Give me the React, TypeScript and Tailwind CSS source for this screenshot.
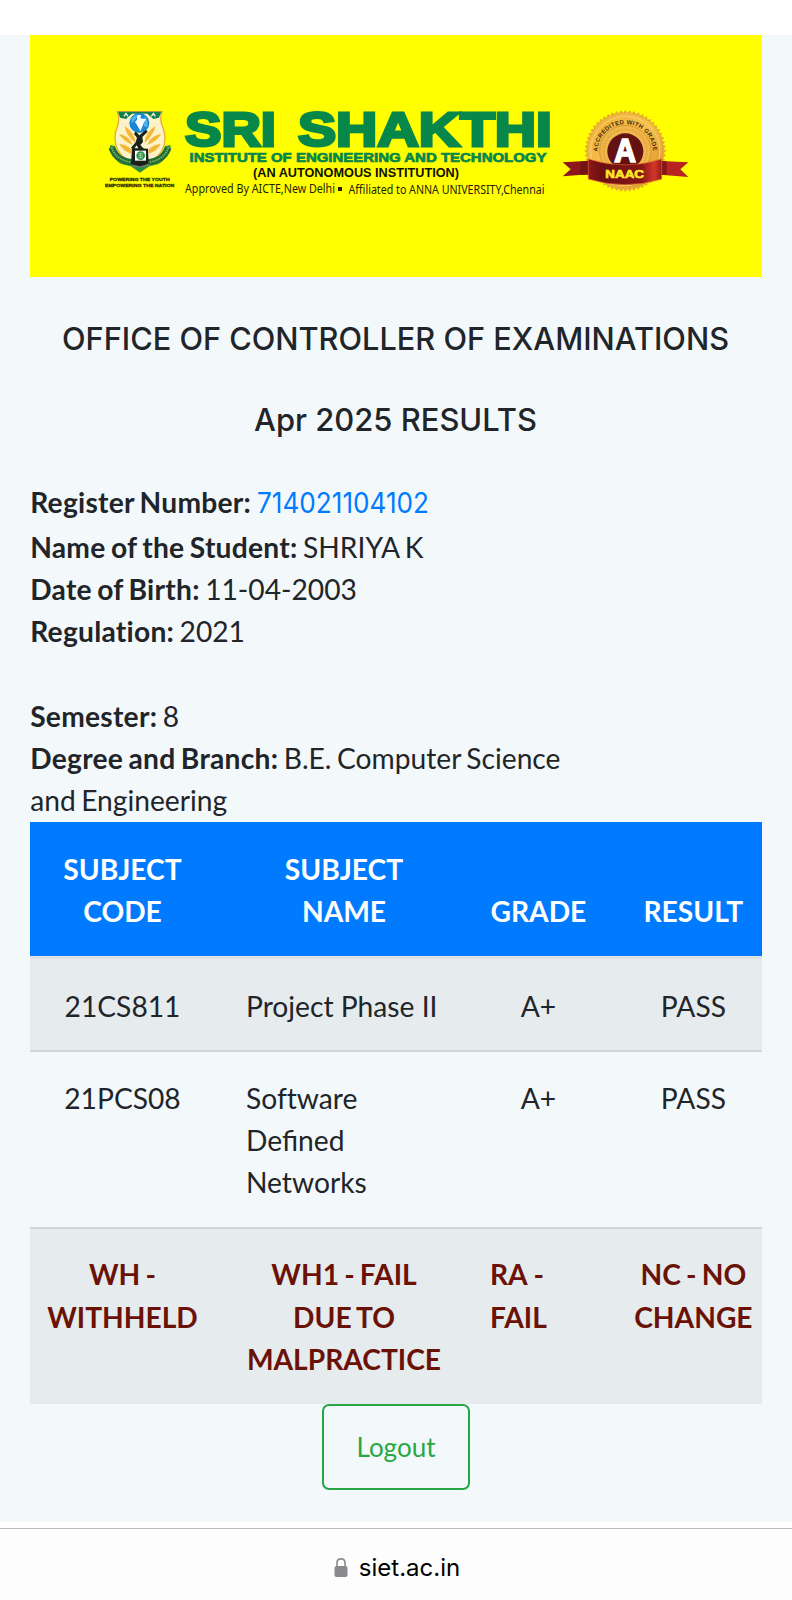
import React from "react";

const sunburst = Array.from({ length: 112 }, (_, i) => {
  const r = i % 2 ? 115 : 123;
  const a = (i / 112) * Math.PI * 2;
  return `${(226 + r * Math.cos(a)).toFixed(1)},${(168 + r * Math.sin(a)).toFixed(1)}`;
}).join(" ");

function Emblem() {
  return (
    <g transform="translate(90 95) scale(0.33333)">
      <path d="M61 150 L75 153 Q88 196 150 206 Q212 196 225 153 L241 150 L243 166 L234 171 Q229 194 204 208 L178 214 L150 233 L122 214 L94 207 Q70 194 67 172 L57 165 Z" fill="#3f9440" />
      <path d="M82 50 H216 Q207 72 219 98 Q229 124 222 151 Q211 192 150 216 Q90 192 78 151 Q71 122 81 98 Q91 72 82 50 Z" fill="#fdf3c8" stroke="#e9a73c" strokeWidth="4" />
      <path d="M84 50 H214 L207 68 L190 72 L172 56 H126 L108 72 L90 68 Z" fill="#16804a" />
      <path d="M102 64 l6 -9 l6 9 M184 64 l6 -9 l6 9" stroke="#eaf5dd" strokeWidth="4" fill="none" />
      <g fill="#f3b83a">
        <path d="M128 149 Q99 139 87 116 Q117 122 128 149 Z" />
        <path d="M138 145 Q107 121 104 93 Q133 111 138 145 Z" />
        <path d="M172 149 Q202 139 214 116 Q182 122 172 149 Z" />
        <path d="M164 144 Q190 121 197 93 Q165 111 164 144 Z" />
        <path d="M88 147 Q108 148 125 164 L123 176 Q98 168 88 147 Z" />
        <path d="M212 147 Q192 148 175 164 L177 176 Q202 168 212 147 Z" />
      </g>
      <path d="M65 158 Q78 198 134 203 M235 158 Q222 198 166 203" fill="none" stroke="#226e35" strokeWidth="19" />
      <path d="M65 158 Q78 198 134 203 M235 158 Q222 198 166 203" fill="none" stroke="#8db878" strokeWidth="5" strokeDasharray="4 3" />
      <path d="M126 209 L150 232 L176 209 Z" fill="#249344" />
      <circle cx="148" cy="84" r="30" fill="#1687d4" />
      <path d="M123 72 Q134 57 144 61 Q135 78 126 84 Z M164 64 Q175 75 172 96 Q158 98 163 82 Z" fill="#53b4e9" />
      <path d="M142 60 L153 60 L151 70 L169 73 L162 82 L158 93 L151 109 L143 93 L135 81 L141 74 Z" fill="#f8fbff" />
      <path d="M137 109 L148 121 L168 104 L173 110 L157 126 L159 141 L151 150 L162 162 H146 L140 151 L130 164 L123 158 L137 142 L141 128 L132 117 Z" fill="#17241e" />
      <path d="M126 159 L174 161 L176 205 L151 218 L123 207 Z" fill="#192019" />
      <path d="M135 167 H168 V197 H135 Z" fill="#fff" />
      <circle cx="152" cy="182" r="13" fill="#2b944a" />
      <path d="M145 176 H159 M145 182 H159 M145 188 H159 M152 174 V191" stroke="#b7dcba" strokeWidth="2" />
      <path d="M125 211 L151 216 L178 208" stroke="#777f76" strokeWidth="4" fill="none" />
      <g fontFamily="Liberation Sans, sans-serif" fontWeight="700" fontSize="12.5" fill="#332f00" stroke="#332f00" strokeWidth="0.8">
        <text x="59" y="258" textLength="180" lengthAdjust="spacingAndGlyphs">POWERING THE YOUTH</text>
        <text x="45" y="277" textLength="208" lengthAdjust="spacingAndGlyphs">EMPOWERING THE NATION</text>
      </g>
    </g>
  );
}

function NaacBadge() {
  return (
    <g transform="translate(550 95) scale(0.33333)">
      <defs>
        <linearGradient id="gold" x1="0" y1="0" x2="1" y2="1">
          <stop offset="0" stopColor="#f0b03a" />
          <stop offset="0.5" stopColor="#f4c04c" />
          <stop offset="1" stopColor="#d98b22" />
        </linearGradient>
        <linearGradient id="band">
          <stop offset="0" stopColor="#8e1719" />
          <stop offset="0.18" stopColor="#6c1012" />
          <stop offset="0.72" stopColor="#861516" />
          <stop offset="0.9" stopColor="#d3372a" />
          <stop offset="1" stopColor="#971b19" />
        </linearGradient>
        <path id="arc" d="M143 170 A83 83 0 0 1 309 170" />
      </defs>
      <polygon points={sunburst} fill="#e5ac36" />
      <circle cx="226" cy="168" r="113" fill="url(#gold)" />
      <circle cx="226" cy="168" r="104" fill="none" stroke="#f8d26c" strokeWidth="3" />
      <circle cx="226" cy="168" r="77" fill="#efb64b" stroke="#c88222" strokeWidth="2" />
      <circle cx="226" cy="168" r="65" fill="none" stroke="#d99a35" strokeWidth="5" strokeDasharray="2 3" />
      <circle cx="226" cy="169" r="54" fill="#641111" />
      <text fontFamily="Liberation Sans, sans-serif" fontWeight="700" fontSize="18" fill="#4b2808">
        <textPath href="#arc" textLength="258">ACCREDITED WITH GRADE</textPath>
      </text>
      <path d="M38 202 L119 197 V238 L38 244 L62 223 Z" fill="#8e171b" />
      <path d="M332 198 L415 202 L391 223 L415 246 L332 239 Z" fill="#b7231f" />
      <path d="M91 200 L117 197 V240 L91 240 Z M332 198 L350 199 V240 L332 239 Z" fill="#651113" opacity=".65" />
      <path d="M115 192 Q226 228 335 192 V252 Q226 286 115 252 Z" fill="url(#band)" stroke="#e4602b" strokeWidth="2" />
      <g fontFamily="Liberation Sans, sans-serif" fontWeight="700">
        <text x="193" y="202" fontSize="97" fill="#fff" stroke="#fff" strokeWidth="5" textLength="65" lengthAdjust="spacingAndGlyphs">A</text>
        <text x="166" y="250" fontSize="35" fill="#ffe928" stroke="#ffe928" strokeWidth="2" textLength="116" lengthAdjust="spacingAndGlyphs">NAAC</text>
      </g>
    </g>
  );
}

function Banner() {
  return (
    <svg viewBox="30 35 732 242" className="block h-[242px] w-[732px] bg-[#ffff00] [word-spacing:0px]">
      <Emblem />
      <g fill="#07874a" stroke="#07874a" fontFamily="Liberation Sans, sans-serif" fontWeight="700">
        <text x="185" y="146" fontSize="48.5" textLength="91" lengthAdjust="spacingAndGlyphs" strokeWidth="3">SRI</text>
        <text x="298" y="146" fontSize="48.5" textLength="254" lengthAdjust="spacingAndGlyphs" strokeWidth="3">SHAKTHI</text>
        <text x="189.5" y="161.8" fontSize="13" textLength="357" lengthAdjust="spacingAndGlyphs" strokeWidth="0.7">INSTITUTE OF ENGINEERING AND TECHNOLOGY</text>
      </g>
      <text x="253" y="177" fontSize="13.5" fontFamily="Liberation Sans, sans-serif" fontWeight="700" fill="#111000" textLength="206" lengthAdjust="spacingAndGlyphs">(AN AUTONOMOUS INSTITUTION)</text>
      <g fill="#242200" fontFamily="Noto Sans, sans-serif" fontSize="12">
        <text x="185" y="193.3" textLength="150" lengthAdjust="spacingAndGlyphs">Approved By AICTE,New Delhi</text>
        <rect x="338" y="187" width="4" height="4" />
        <text x="348.5" y="194" textLength="196" lengthAdjust="spacingAndGlyphs">Affiliated to ANNA UNIVERSITY,Chennai</text>
      </g>
      <NaacBadge />
    </svg>
  );
}

function Heading({ children, width }: { children: string; width: number }) {
  return (
    <svg width={width} height="48" className="block overflow-visible" role="heading">
      <text x="-1" y="35" textLength={width + 1} fontFamily="Inter, sans-serif" fontWeight="500" fontSize="31.5" fill="#212529" lengthAdjust="spacingAndGlyphs">{children}</text>
    </svg>
  );
}

function Label({ children }: { children: string }) {
  return <b className="tracking-[0.25px] [word-spacing:-1.7px]">{children}</b>;
}

function Lines({ items }: { items: string[] }) {
  return <>{items.map((t) => <span key={t} className="block">{t}</span>)}</>;
}

const cols = "grid grid-cols-[185px_258px_130.8px_158.2px]";

export default function App() {
  return (
    <div className="flex h-[1600px] w-[792px] flex-col overflow-hidden bg-white pt-[35px] font-['Lato',sans-serif] text-[28.2px] leading-[42.3px] text-[#212529] [word-spacing:-1.7px]">
      <main className="h-[1487px] shrink-0 bg-[#f3f8fb] pl-[30px]">
        <Banner />
        <div className="flex h-[204.3px] w-[732px] flex-col items-center gap-[33px] pt-[38px] [word-spacing:0px]">
          <Heading width={666}>OFFICE OF CONTROLLER OF EXAMINATIONS</Heading>
          <Heading width={282}>Apr 2025 RESULTS</Heading>
        </div>
        <section className="whitespace-nowrap pl-[0.2px]">
          <div className="flex h-[44.4px] gap-[6px]">
            <Label>Register Number:</Label>
            <svg width="172" height="42" className="overflow-visible">
              <text x="0" y="32" textLength="172" lengthAdjust="spacingAndGlyphs" fontFamily="Inter, sans-serif" fontSize="28" fill="#007bff">714021104102</text>
            </svg>
          </div>
          <div><Label>Name of the Student:</Label> SHRIYA K</div>
          <div><Label>Date of Birth:</Label> 11-04-2003</div>
          <div><Label>Regulation:</Label> 2021</div>
          <div className="mt-[42.3px]"><Label>Semester:</Label> 8</div>
          <div><Label>Degree and Branch:</Label> B.E. Computer Science</div>
          <div>and Engineering</div>
        </section>
        <div className="mt-[0.6px] w-[732px] whitespace-nowrap text-center">
          <div className={`${cols} h-[134px] items-end bg-[#007bff] pb-[24.2px] font-bold text-white`}>
            <div><Lines items={["SUBJECT", "CODE"]} /></div>
            <div><Lines items={["SUBJECT", "NAME"]} /></div>
            <div>GRADE</div>
            <div className="pl-[21px]">RESULT</div>
          </div>
          <div className={`${cols} h-[96px] border-t-[3px] border-b-2 border-t-[#dee2e6] border-b-[#cfd5da] bg-[#e6ebee] pt-[25.6px]`}>
            <div>21CS811</div>
            <div className="pl-[31px] text-left [word-spacing:0px]">Project Phase II</div>
            <div>A+</div>
            <div className="pl-[21px]">PASS</div>
          </div>
          <div className={`${cols} h-[177px] border-b-2 border-[#cfd5da] pt-[24.4px]`}>
            <div>21PCS08</div>
            <div className="pl-[31px] text-left">
              <span className="block [font-variant-ligatures:none]">Software</span>
              <Lines items={["Defined", "Networks"]} />
            </div>
            <div>A+</div>
            <div className="pl-[21px]">PASS</div>
          </div>
          <div className={`${cols} h-[175px] bg-[#e6ebee] pt-[24px] font-bold text-[#6b1206]`}>
            <div><Lines items={["WH -", "WITHHELD"]} /></div>
            <div><Lines items={["WH1 - FAIL", "DUE TO", "MALPRACTICE"]} /></div>
            <div className="pl-[17px] text-left [word-spacing:0px]"><Lines items={["RA -", "FAIL"]} /></div>
            <div className="pl-[21px]"><Lines items={["NC - NO", "CHANGE"]} /></div>
          </div>
        </div>
        <div className="flex w-[732px] justify-center">
          <button className="h-[86px] w-[148px] rounded-[7px] border-2 border-[#28a745] text-[26px] text-[#28a745]">Logout</button>
        </div>
      </main>
      <footer className="mt-[5.5px] flex grow items-center justify-center gap-[11px] border-t border-[#b5bcbf] bg-[#fdfdfd] pt-[7px] pl-[2px] font-['Inter',sans-serif] text-[24px] text-black">
        <svg width="14" height="20" viewBox="0 0 14 20">
          <path d="M3 9 V5 Q3 0.9 7 0.9 Q11 0.9 11 5 V9" fill="none" stroke="#8a8a8e" strokeWidth="1.6" />
          <rect x="0.5" y="8" width="13" height="11" rx="2" fill="#8a8a8e" />
        </svg>
        <span>siet.ac.in</span>
      </footer>
    </div>
  );
}
